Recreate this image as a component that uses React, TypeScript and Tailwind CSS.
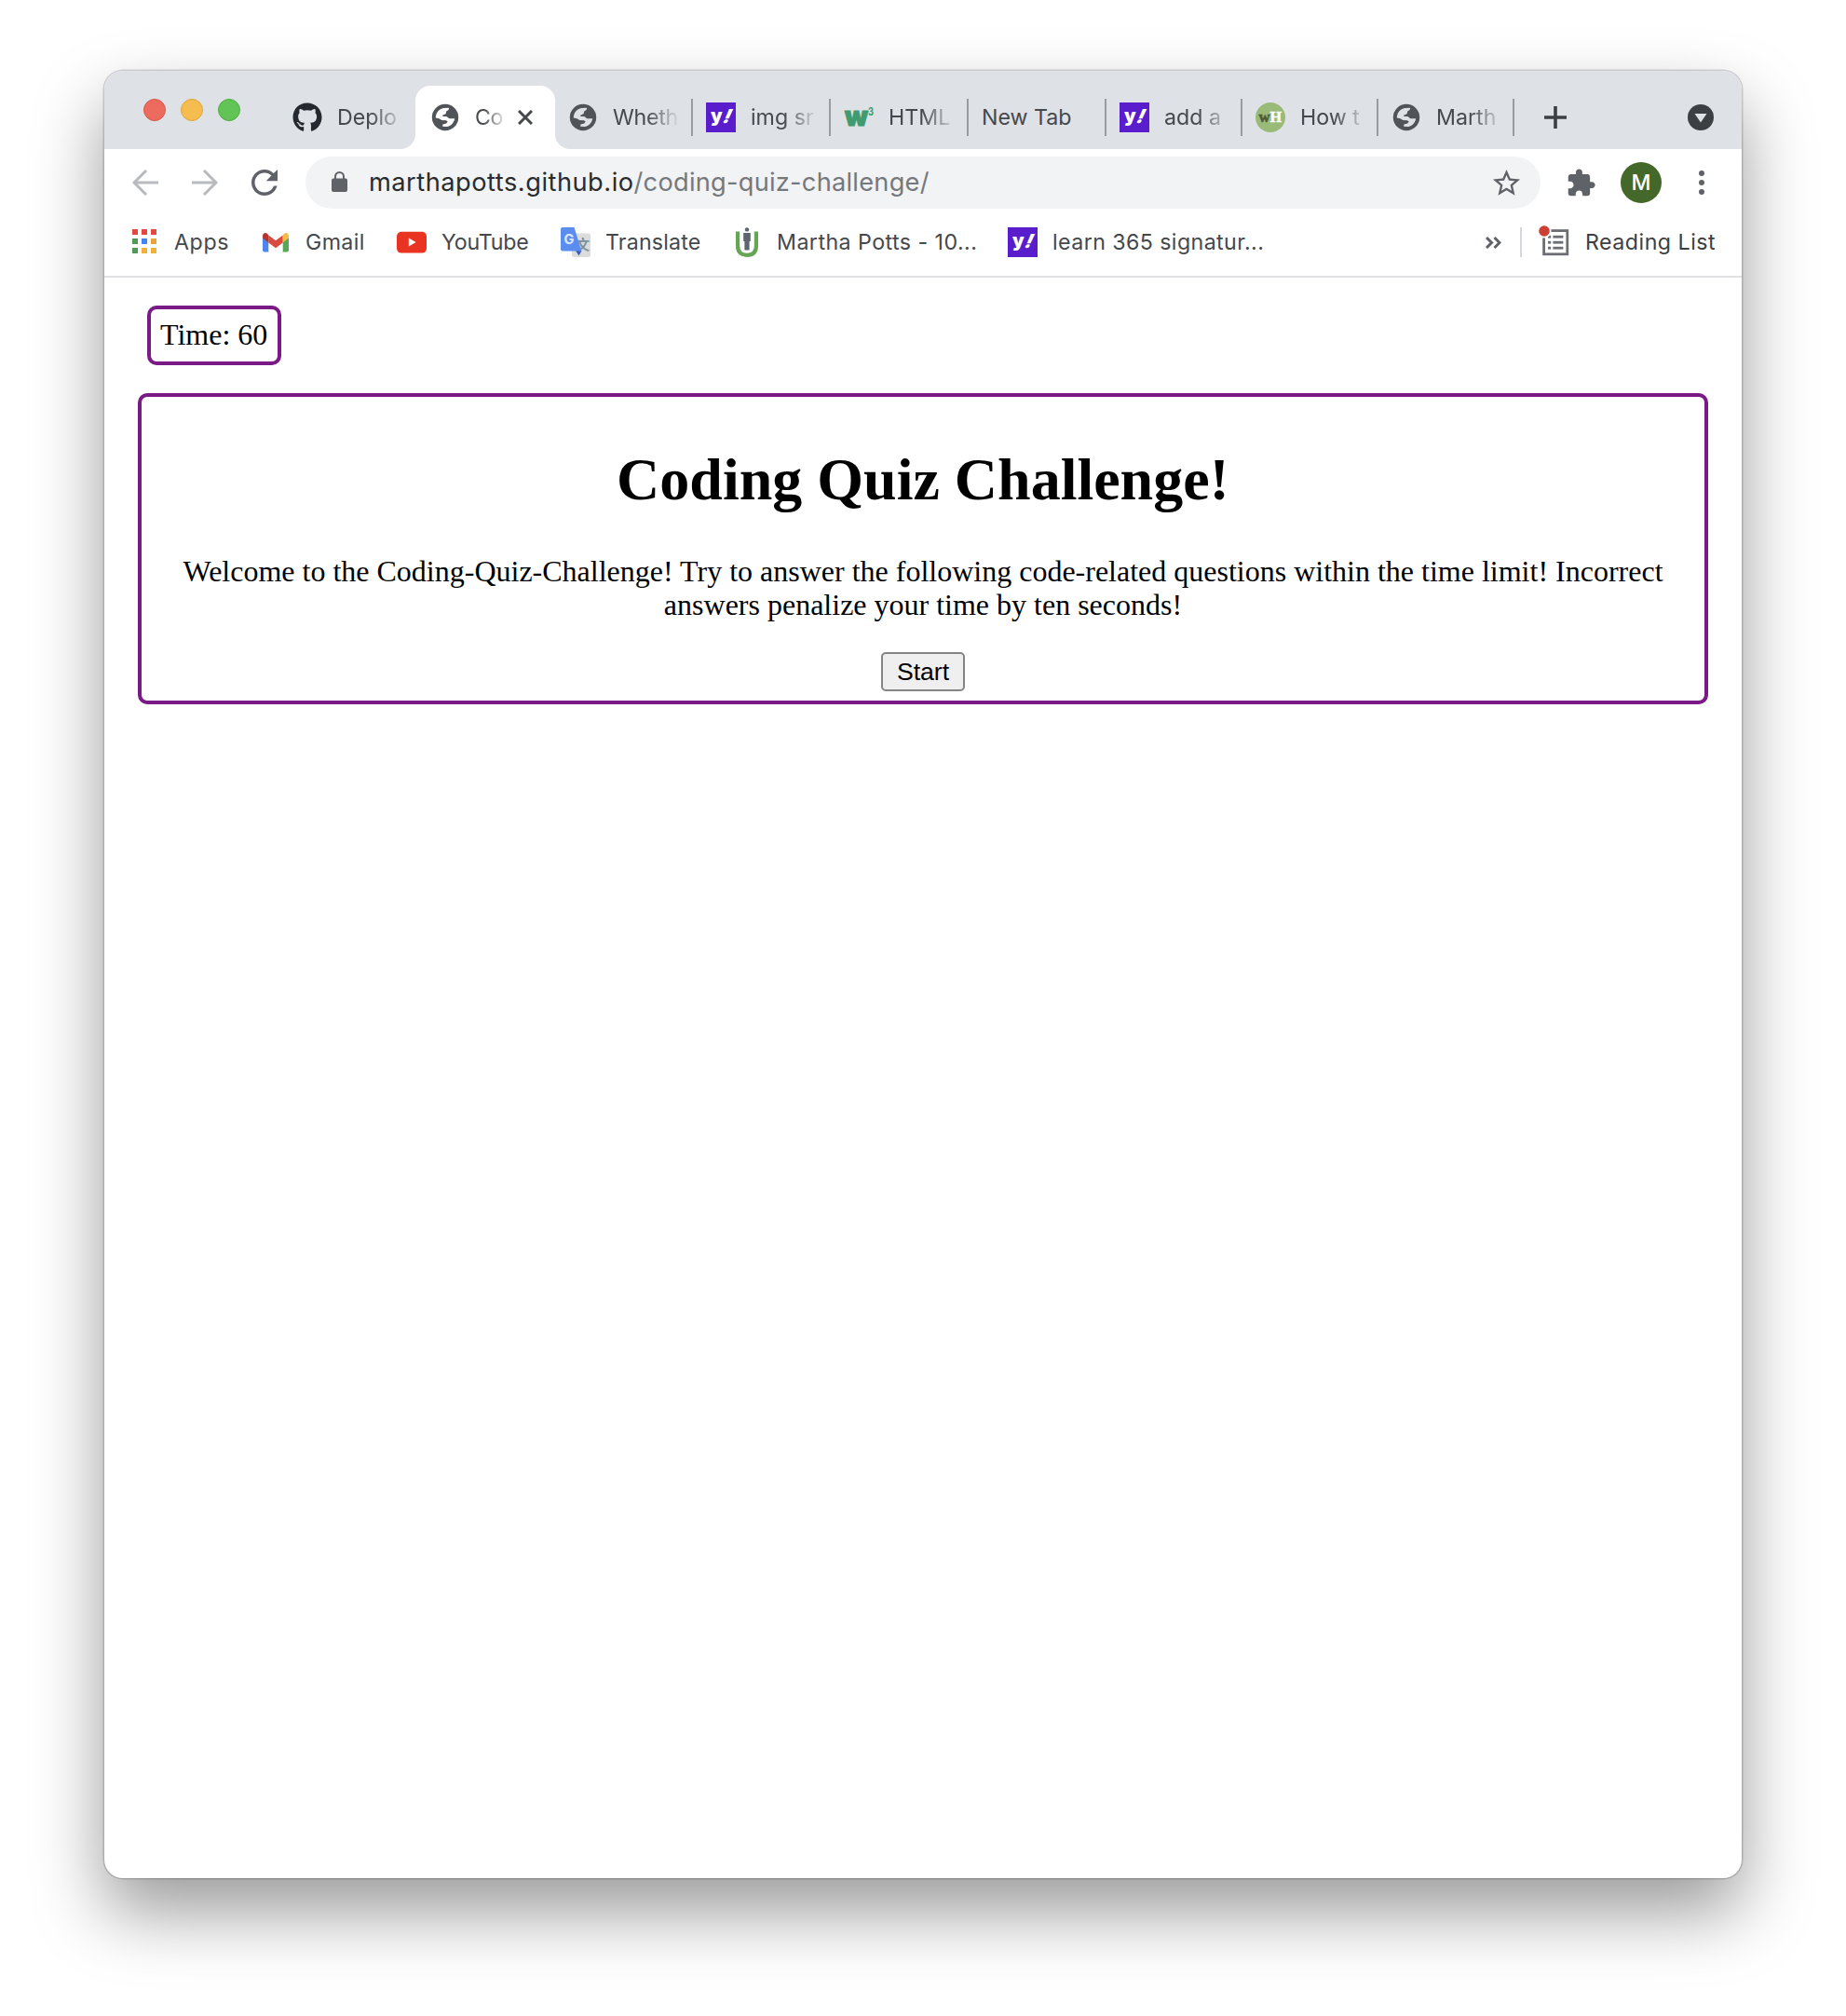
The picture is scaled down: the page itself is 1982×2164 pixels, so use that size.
import type { ReactNode } from "react";
import { FaGithub } from "react-icons/fa";
import { MdStarBorder } from "react-icons/md";

function Globe({ land = "#dee1e6" }: { land?: string }) {
  return (
    <svg viewBox="0 0 32 32" className="size-8 shrink-0">
      <circle cx="16" cy="16" r="14.2" fill="#505357" />
      <path
        d="M5.8 16.4C5.8 11 9.4 6.8 14.4 5.9L20.2 5.8L19.6 8L17.2 9.6L16.6 12.2L13.2 13.8L13.4 15H17.4L20.4 17.2H26.2C25.7 21.4 22.2 25.4 17.6 26.1L13.2 25.8L13.4 23.4L17.2 22.6L18.7 20.6L17 19.2L12.4 19L9.4 17.2Z"
        fill={land}
      />
    </svg>
  );
}

function Yahoo() {
  return (
    <svg viewBox="0 0 32 32" className="size-8 shrink-0">
      <rect width="32" height="32" fill="#5a1dcb" />
      <text x="5" y="21" fontSize="20" fontWeight="900" fill="#fff" fontFamily="Inter, sans-serif">y</text>
      <text x="0" y="0" fontSize="20.5" fontWeight="900" fill="#fff" fontFamily="Inter, sans-serif" transform="translate(16.5 21.5) skewX(-24)">!</text>
    </svg>
  );
}

function W3() {
  return (
    <svg viewBox="0 0 32 32" className="size-8 shrink-0">
      <text x="1" y="24.5" fontSize="28" fontWeight="900" fill="#3f9c70" stroke="#3f9c70" strokeWidth="1" fontFamily="Inter, sans-serif" textLength="25" lengthAdjust="spacingAndGlyphs">w</text>
      <text x="26" y="13.5" fontSize="12" fontWeight="700" fill="#3f9c70" fontFamily="Inter, sans-serif" textLength="6" lengthAdjust="spacingAndGlyphs">3</text>
    </svg>
  );
}

function WikiHow() {
  return (
    <svg viewBox="0 0 32 32" className="size-8 shrink-0">
      <circle cx="16" cy="16" r="16" fill="#9aba78" />
      <text x="3.5" y="20.5" fontSize="17" fontWeight="700" fill="#4c5a3c" stroke="#4c5a3c" strokeWidth="0.6" fontFamily="'Liberation Serif', serif" textLength="12" lengthAdjust="spacingAndGlyphs">w</text>
      <text x="15.5" y="20.8" fontSize="17" fontWeight="700" fill="#fff" stroke="#fff" strokeWidth="0.6" fontFamily="'Liberation Serif', serif" textLength="12.5" lengthAdjust="spacingAndGlyphs">H</text>
    </svg>
  );
}

function AppsGrid() {
  const colors = ["#e24a3f", "#e24a3f", "#e24a3f", "#4d9a5b", "#4285f4", "#e8a33d", "#4d9a5b", "#f0b13c", "#f0b13c"];
  return (
    <svg viewBox="0 0 32 32" className="size-8 shrink-0">
      {colors.map((c, i) => (
        <rect key={i} x={3 + (i % 3) * 10} y={2 + Math.floor(i / 3) * 10} width="6" height="6" fill={c} />
      ))}
    </svg>
  );
}

function Gmail() {
  return (
    <svg viewBox="0 0 32 32" className="size-8 shrink-0">
      <path d="M2 9V24.5Q2 26.5 4 26.5H8.3V13Z" fill="#5086ec" />
      <path d="M30 9V24.5Q30 26.5 28 26.5H23.7V13Z" fill="#58a65c" />
      <path d="M8.3 8.4L16 14.2L23.7 8.4V16.6L16 22.2L8.3 16.6Z" fill="#db4a3e" />
      <path d="M2 9.3V11.6L8.3 16.6V8.4L6.6 6.6C4.6 5.1 2 6.6 2 9.3Z" fill="#b5332a" />
      <path d="M30 9.3V11.6L23.7 16.6V8.4L25.4 6.6C27.4 5.1 30 6.6 30 9.3Z" fill="#f2bd42" />
    </svg>
  );
}

function YouTube() {
  return (
    <svg viewBox="0 0 32 32" className="size-8 shrink-0">
      <rect y="4.8" width="32" height="22.8" rx="5" fill="#e93323" />
      <path d="M12.8 11.6L20.6 16L12.8 20.4Z" fill="#fff" />
    </svg>
  );
}

function Translate() {
  return (
    <svg viewBox="0 0 32 32" className="size-8 shrink-0">
      <rect x="12" y="6.5" width="20" height="25.5" rx="2" fill="#dcdcdc" />
      <text x="16.5" y="24" fontSize="14.5" fontWeight="700" fill="#7a919b" fontFamily="'Noto Sans CJK SC', sans-serif">文</text>
      <path d="M16 25H22.5L19.5 30.5Z" fill="#3f57b8" />
      <path d="M2 0H14.5L22.5 25.5H2Q0 25.5 0 23.5V2Q0 0 2 0Z" fill="#5b8def" />
      <text x="3.4" y="17.8" fontSize="14.5" fontWeight="700" fill="#dbe7fd" fontFamily="Inter, sans-serif">G</text>
    </svg>
  );
}

function UPerson() {
  return (
    <svg viewBox="0 0 32 32" className="size-8 shrink-0">
      <path d="M6.1 4.5V20Q6.1 29.8 16 29.8T25.9 20V4.5" fill="none" stroke="#65a554" strokeWidth="4.2" />
      <circle cx="16" cy="2.4" r="2.2" fill="#5d666d" />
      <path d="M12.2 6H19.8V15H18.6V24.5H13.4V15H12.2Z" fill="#5d666d" />
    </svg>
  );
}

function ReadingListIcon() {
  return (
    <svg viewBox="0 0 36 36" className="size-9 shrink-0">
      <rect x="5.6" y="5.6" width="25.2" height="25.2" fill="none" stroke="#6b6e73" strokeWidth="2.8" />
      <g fill="#6b6e73">
        <rect x="10" y="10.8" width="3.2" height="2.8" />
        <rect x="15.4" y="10.8" width="11" height="2.8" />
        <rect x="10" y="16.8" width="3.2" height="2.8" />
        <rect x="15.4" y="16.8" width="11" height="2.8" />
        <rect x="10" y="22.8" width="3.2" height="2.8" />
        <rect x="15.4" y="22.8" width="11" height="2.8" />
      </g>
      <circle cx="6" cy="6" r="7.6" fill="#fff" />
      <circle cx="6" cy="6" r="5.8" fill="#cc4133" />
    </svg>
  );
}

function Tab({ icon, label, className }: { icon: ReactNode; label: string; className: string }) {
  return (
    <div className={`flex h-[68px] shrink-0 items-center gap-4 ${className}`}>
      {icon}
      <span className="w-[72px] whitespace-nowrap text-[#45484c] [mask-image:linear-gradient(to_right,black_50%,transparent)]">
        {label}
      </span>
    </div>
  );
}

function Divider() {
  return <div className="-ml-0.5 h-10 w-0.5 shrink-0 bg-[#989b9f]" />;
}

function Bookmark({ icon, label, className }: { icon: ReactNode; label: string; className: string }) {
  return (
    <div className={`flex shrink-0 items-center gap-4 whitespace-nowrap ${className}`}>
      {icon}
      <span>{label}</span>
    </div>
  );
}

export default function App() {
  return (
    <div className="h-[2164px] w-[1982px] overflow-hidden bg-white pt-[76px] pl-[112px] font-['Inter',sans-serif]">
      <div className="flex h-[1940px] w-[1758px] flex-col rounded-[20px] bg-white shadow-[0_0_0_1.5px_rgba(0,0,0,0.16),0_36px_76px_rgba(0,0,0,0.4)]">
        <div className="flex h-[84px] shrink-0 items-end rounded-t-[20px] bg-[#dee1e6] text-[23.2px]">
          <div className="flex h-[84px] w-[186px] shrink-0 gap-4 pt-[30px] pl-[42px]">
            <div className="size-6 rounded-full border border-[#d8564b] bg-[#ed6a5e]" />
            <div className="size-6 rounded-full border border-[#dfa53c] bg-[#f5bd4f]" />
            <div className="size-6 rounded-full border border-[#51ad43] bg-[#61c454]" />
          </div>
          <Tab icon={<FaGithub className="size-8 shrink-0 text-[#24292f]" />} label="Deplo" className="w-[148px] pl-4" />
          <div className="relative flex h-[68px] w-[150px] shrink-0 items-center gap-4 rounded-t-2xl bg-white pl-4">
            <svg viewBox="0 0 16 16" className="absolute bottom-0 -left-4 size-4">
              <path d="M16 0V16H0A16 16 0 0 0 16 0Z" fill="#fff" />
            </svg>
            <svg viewBox="0 0 16 16" className="absolute -right-4 bottom-0 size-4">
              <path d="M0 0V16H16A16 16 0 0 1 0 0Z" fill="#fff" />
            </svg>
            <Globe land="#fff" />
            <span className="w-[30px] whitespace-nowrap tracking-[-0.4px] text-[#45484c] [mask-image:linear-gradient(to_right,black_30%,transparent_115%)]">
              Co
            </span>
            <svg viewBox="0 0 16 16" className="size-4 shrink-0">
              <path d="M1 1L15 15M15 1L1 15" stroke="#45484c" strokeWidth="3" />
            </svg>
          </div>
          <Tab icon={<Globe />} label="Wheth" className="w-[148px] pl-3.5 tracking-[-0.3px]" />
          <div className="flex h-[68px] items-center">
            <Divider />
            <Tab icon={<Yahoo />} label="img sr" className="w-[148px] pl-3.5" />
            <Divider />
            <Tab icon={<W3 />} label="HTML" className="w-[148px] pl-3.5" />
            <Divider />
            <div className="w-[148px] shrink-0 pl-3.5 text-[#45484c]">New Tab</div>
            <Divider />
            <Tab icon={<Yahoo />} label="add a" className="w-[146px] pl-3.5" />
            <Divider />
            <Tab icon={<WikiHow />} label="How t" className="w-[146px] pl-3.5" />
            <Divider />
            <Tab icon={<Globe />} label="Marth" className="w-[146px] pl-3.5" />
            <Divider />
            <svg viewBox="0 0 24 24" className="ml-8 size-6 shrink-0">
              <path d="M12 0V24M0 12H24" stroke="#3c4043" strokeWidth="3.6" />
            </svg>
            <svg viewBox="0 0 28 28" className="ml-[130px] size-7 shrink-0">
              <circle cx="14" cy="14" r="14" fill="#3c4043" />
              <path d="M7.5 10H20.5L14 19.5Z" fill="#dee1e6" />
            </svg>
          </div>
        </div>

        <div className="flex h-[72px] shrink-0 items-center">
          <svg viewBox="0 0 28 28" className="ml-[30px] size-7 shrink-0" fill="none" stroke="#b8babd" strokeWidth="3">
            <path d="M28 14H2.5M15 1L2 14L15 27" />
          </svg>
          <svg viewBox="0 0 28 28" className="ml-9 size-7 shrink-0" fill="none" stroke="#b8babd" strokeWidth="3">
            <path d="M0 14H25.5M13 1L26 14L13 27" />
          </svg>
          <svg viewBox="4 4 16 16" className="ml-9 size-7 shrink-0" fill="#5f6368">
            <path d="M17.65 6.35C16.2 4.9 14.21 4 12 4c-4.42 0-7.99 3.58-7.99 8s3.57 8 7.99 8c3.73 0 6.84-2.55 7.73-6h-2.08c-.82 2.33-3.04 4-5.65 4-3.31 0-6-2.69-6-6s2.69-6 6-6c1.66 0 3.14.69 4.22 1.78L13 11h7V4l-2.35 2.35z" />
          </svg>
          <div className="ml-[30px] flex h-14 w-[1326px] shrink-0 items-center rounded-full bg-[#f1f3f4] pr-[19px] pl-7">
            <svg viewBox="0 0 17 22" className="mb-0.5 h-[22px] w-[17px] shrink-0">
              <path d="M4 9V5.5A4.5 4.5 0 0 1 13 5.5V9" fill="none" stroke="#5f6368" strokeWidth="2" />
              <rect y="7.6" width="17" height="14.4" rx="2" fill="#5f6368" />
            </svg>
            <div className="ml-[23px] grow text-[27.2px] tracking-[0.26px] whitespace-nowrap text-[#75787c]">
              <span className="tracking-[0.52px] text-[#2a2b2e]">marthapotts.github.io</span>/coding-quiz-challenge/
            </div>
            <MdStarBorder className="size-[35px] shrink-0 text-[#5f6368]" />
          </div>
          <svg viewBox="0 0 24 24" className="ml-[27px] size-[33px] shrink-0" fill="#5f6368">
            <path d="M20.5 11H19V7c0-1.1-.9-2-2-2h-4V3.5C13 2.12 11.88 1 10.5 1S8 2.12 8 3.5V5H4c-1.1 0-1.99.9-1.99 2v3.8H3.5c1.49 0 2.7 1.21 2.7 2.7s-1.21 2.7-2.7 2.7H2V20c0 1.1.9 2 2 2h3.8v-1.5c0-1.49 1.21-2.7 2.7-2.7 1.49 0 2.7 1.21 2.7 2.7V22H17c1.1 0 2-.9 2-2v-4h1.5c1.38 0 2.5-1.12 2.5-2.5S21.88 11 20.5 11z" />
          </svg>
          <div className="ml-[26px] flex size-11 shrink-0 items-center justify-center rounded-full bg-[#44682a] text-[23px] font-medium text-white">
            M
          </div>
          <svg viewBox="0 0 6 26" className="ml-10 h-[26px] w-1.5 shrink-0" fill="#5f6368">
            <circle cx="3" cy="3" r="3" />
            <circle cx="3" cy="13" r="3" />
            <circle cx="3" cy="23" r="3" />
          </svg>
        </div>

        <div className="flex h-[66px] shrink-0 items-center border-b-2 border-[#e0e1e3] pb-2 pl-[27px] text-[23.2px] text-[#45484c]">
          <Bookmark icon={<AppsGrid />} label="Apps" className="w-[141px] tracking-[0.6px]" />
          <Bookmark icon={<Gmail />} label="Gmail" className="w-[146px] tracking-[0.35px]" />
          <Bookmark icon={<YouTube />} label="YouTube" className="w-[176px] tracking-[-0.2px]" />
          <Bookmark icon={<Translate />} label="Translate" className="w-[184px] tracking-[0.18px]" />
          <Bookmark icon={<UPerson />} label="Martha Potts - 10..." className="w-[296px] tracking-[0.45px]" />
          <Bookmark icon={<Yahoo />} label="learn 365 signatur..." className="w-[513px] tracking-[0.42px]" />
          <svg viewBox="0 0 17 13" className="h-[13px] w-[17px] shrink-0" fill="none" stroke="#5f6368" strokeWidth="3">
            <path d="M1 1L6.5 6.5L1 12M9.5 1L15 6.5L9.5 12" />
          </svg>
          <div className="ml-5 h-8 w-0.5 shrink-0 bg-[#d5d7da]" />
          <div className="ml-[18px] flex items-center gap-[14px] tracking-[0.5px] whitespace-nowrap text-[#3c4043]">
            <ReadingListIcon />
            <span>Reading List</span>
          </div>
        </div>

        <div className="px-9 pt-[30px] font-['Liberation_Serif',serif] text-[32px] leading-9 text-black">
          <div className="ml-2.5 inline-block w-36 rounded-[10px] border-4 border-[#7a1a86] px-2.5 pt-[9px] pb-[11px] align-top">
            Time: 60
          </div>
          <div className="mt-[30px] h-[334px] rounded-[10px] border-4 border-[#7a1a86] px-2.5 text-center">
            <h1 className="mt-[52px] text-[64px] leading-[74px] font-bold">Coding Quiz Challenge!</h1>
            <p className="mt-[43px]">
              Welcome to the Coding-Quiz-Challenge! Try to answer the following code-related questions within the time
              limit! Incorrect answers penalize your time by ten seconds!
            </p>
            <button className="mt-[33px] h-[42px] w-[90px] rounded-[5px] border-2 border-[#858585] bg-[#efefef] align-top font-['Liberation_Sans',sans-serif] text-[26.6px] leading-[38px]">
              Start
            </button>
          </div>
        </div>
      </div>
    </div>
  );
}
